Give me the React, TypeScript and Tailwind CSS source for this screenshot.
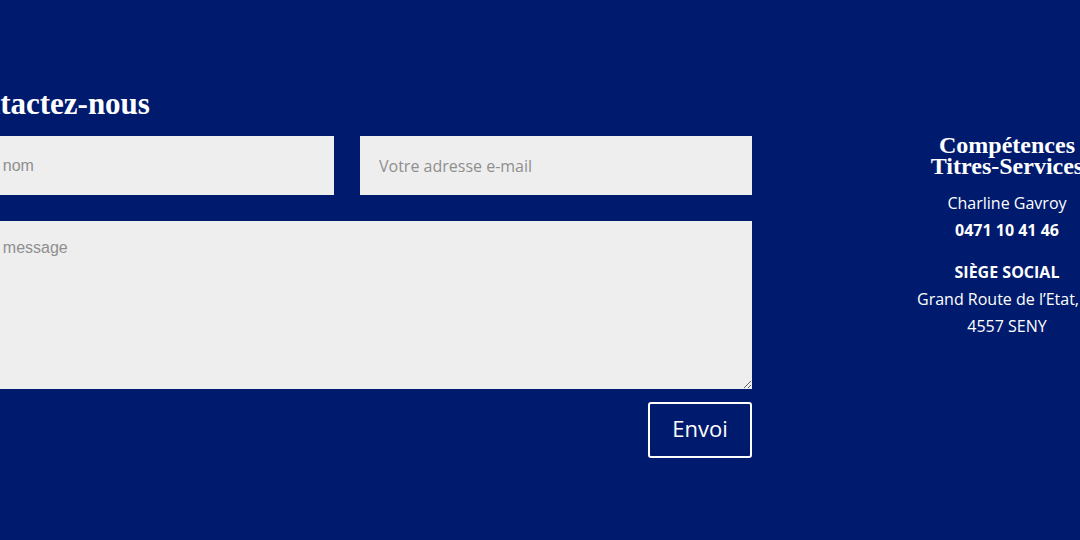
import React from "react";

export default function App() {
  const open = { fontFamily: '"Open Sans", "Noto Sans", sans-serif' };
  const arial = { fontFamily: '"Liberation Sans", Arial, sans-serif' };
  const serif = { fontFamily: '"Liberation Serif", "DejaVu Serif", serif' };
  return (
    <div className="w-[1080px] h-[540px] bg-[#001b6e] overflow-hidden flex">
      <div className="ml-[-58px] w-[810px] shrink-0 pt-[89px] flex flex-col">
        <h2
          className="text-[31px] leading-[30px] font-bold text-white ml-[3px] mb-[17px]"
          style={serif}
        >
          Contactez-nous
        </h2>
        <div className="flex gap-[26px]">
          <input
            className="w-[392px] h-[59px] bg-[#eeeeee] px-[19px] text-[16px] text-[#666] placeholder:text-[#8f8f8f] outline-none"
            style={arial}
            placeholder="Votre nom"
          />
          <input
            className="w-[392px] h-[59px] bg-[#eeeeee] px-[19px] text-[16px] text-[#666] placeholder:text-[#8f8f8f] outline-none"
            style={open}
            placeholder="Votre adresse e-mail"
          />
        </div>
        <textarea
          className="mt-[26px] w-[810px] h-[168px] bg-[#eeeeee] px-[19px] pt-[17px] text-[16px] leading-[20px] text-[#666] placeholder:text-[#8f8f8f] outline-none"
          style={arial}
          placeholder="Votre message"
        />
        <div className="flex justify-end mt-[13px]">
          <button
            className="w-[104px] h-[56px] border-2 border-white rounded-[3px] text-white text-[22px] pb-[3px]"
            style={open}
          >
            Envoi
          </button>
        </div>
      </div>
      <div className="ml-[165px] w-[180px] shrink-0 pt-[135px] text-center text-white">
        <h3 className="text-[24px] leading-[21px] font-bold whitespace-nowrap" style={serif}>
          Compétences
          <br />
          Titres-Services
        </h3>
        <div className="mt-[13px] text-[16px] leading-[27px] whitespace-nowrap" style={open}>
          <p>Charline Gavroy</p>
          <p className="font-bold">0471 10 41 46</p>
          <p className="font-bold mt-[15px]">SIÈGE SOCIAL</p>
          <p className="pr-[22px]">Grand Route de l’Etat,</p>
          <p>4557 SENY</p>
        </div>
      </div>
    </div>
  );
}
